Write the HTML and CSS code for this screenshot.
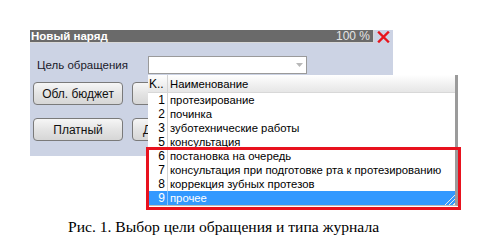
FILE: index.html
```html
<!DOCTYPE html>
<html>
<head>
  <link rel="stylesheet" href="styles.css">
</head>
<body>
  <div class="figure">
    <div class="window">
      <div class="window-header">
        <div class="title-bar">
          <div class="title-text">Новый наряд</div>
          <div class="title-zoom">100 %</div>
        </div>
        <div class="close-button">
          <svg width="13" height="12" viewBox="0 0 13 12">
            <path d="M2 1.5 L11 10.5 M11 1.5 L2 10.5" stroke="#e8141c" stroke-width="2.4" stroke-linecap="square"/>
          </svg>
        </div>
      </div>

      <div class="window-body">
        <div class="field-row">
          <div class="field-label">Цель обращения</div>
          <div class="combo">
            <div class="combo-input"></div>
            <div class="combo-arrow">
              <svg width="7" height="4" viewBox="0 0 7 4"><path d="M0 0 H7 L3.5 4 Z" fill="#b8b8b8"/></svg>
            </div>

            <div class="dropdown">
              <div class="dropdown-head">
                <div class="cell-code">K..</div>
                <div class="cell-name">Наименование</div>
              </div>
              <div class="dropdown-rows" id="rows"></div>
              <div class="annotation"></div>
            </div>
          </div>
        </div>

        <div class="button-row">
          <button class="form-button">Обл. бюджет</button>
          <button class="form-button"></button>
        </div>
        <div class="button-row">
          <button class="form-button">Платный</button>
          <button class="form-button form-button-left">Д</button>
        </div>
      </div>
    </div>
  </div>

  <div class="caption">Рис. 1. Выбор цели обращения и типа журнала</div>

  <script>
    const items = [
      { code: 1, name: 'протезирование' },
      { code: 2, name: 'починка' },
      { code: 3, name: 'зуботехнические работы' },
      { code: 5, name: 'консультация' },
      { code: 6, name: 'постановка на очередь' },
      { code: 7, name: 'консультация при подготовке рта к протезированию' },
      { code: 8, name: 'коррекция зубных протезов' },
      { code: 9, name: 'прочее', selected: true }
    ];

    const container = document.getElementById('rows');
    items.forEach(item => {
      const row = document.createElement('div');
      row.className = item.selected ? 'dropdown-row selected' : 'dropdown-row';

      const code = document.createElement('div');
      code.className = 'cell-code';
      code.textContent = item.code;

      const name = document.createElement('div');
      name.className = 'cell-name';
      name.textContent = item.name;

      row.appendChild(code);
      row.appendChild(name);

      if (item.selected) {
        const grip = document.createElement('div');
        grip.className = 'resize-grip';
        row.appendChild(grip);
      }
      container.appendChild(row);
    });
  </script>
</body>
</html>
```

FILE: styles.css
```css
body {
  margin: 0;
  padding: 0;
  background-color: #ffffff;
  font-family: 'Liberation Sans', Arial, sans-serif;
  font-size: 11px;
  color: #000000;
}

.figure {
  height: 218px;
  padding: 30px 0 0 30px;
  box-sizing: border-box;
}

.window {
  width: 363px;
  background-color: #ccd3e4;
}

.window-header {
  display: flex;
  height: 13px;
  background-color: #ffffff;
}

.title-bar {
  flex: 1;
  display: flex;
  align-items: center;
  justify-content: space-between;
  background-color: #6a6a6a;
  border-right: 1px solid #d8d8d8;
  border-bottom: 1px solid #d8d8d8;
  padding: 0 3px 0 1px;
}

.title-text {
  color: #ffffff;
  font-weight: bold;
  font-size: 11.5px;
}

.title-zoom {
  color: #e4e4e4;
  font-size: 12px;
}

.close-button {
  width: 19px;
  display: flex;
  align-items: center;
  justify-content: center;
  background-color: #ccd3e4;
}

.window-body {
  padding: 13px 0 15px 3px;
}

.field-row {
  display: flex;
  align-items: center;
  height: 18px;
}

.field-label {
  width: 111px;
  padding-left: 4px;
  font-size: 11.5px;
  color: #1a1a2a;
}

.combo {
  position: relative;
  display: flex;
  width: 159px;
  height: 18px;
  box-sizing: border-box;
  border: 1px solid #9a9a9a;
  background-color: #ffffff;
}

.combo-input {
  flex: 1;
}

.combo-arrow {
  width: 14px;
  display: flex;
  align-items: center;
  justify-content: center;
}

.button-row {
  display: flex;
  gap: 9px;
  margin-top: 8px;
}

.button-row + .button-row {
  margin-top: 13px;
}

.form-button {
  width: 90px;
  height: 23px;
  border: 1px solid #7a7a7a;
  border-radius: 4px;
  background: linear-gradient(#f6f6f6, #e4e4e4 50%, #d6d6d6);
  font-family: 'Liberation Sans', Arial, sans-serif;
  font-size: 12px;
  color: #111111;
  padding: 0;
}

.form-button-left {
  text-align: left;
  padding-left: 10px;
}

.dropdown {
  position: absolute;
  top: 18px;
  left: -1px;
  width: 307px;
  background-color: #ffffff;
  border-right: 3px solid #9b9b9b;
  border-bottom: 1px solid #bdbdbd;
  z-index: 2;
}

.dropdown-head {
  display: flex;
  height: 17px;
  align-items: center;
  background: linear-gradient(#ffffff, #f2f2f2 50%, #e6e6e6);
  border-bottom: 1px solid #d8d8d8;
}

.dropdown-row {
  position: relative;
  display: flex;
  height: 14px;
  align-items: center;
}

.cell-code {
  width: 20px;
  padding-right: 2px;
  box-sizing: border-box;
  border-right: 1px solid #d4d4d4;
  font-size: 12px;
  align-self: stretch;
  display: flex;
  align-items: center;
  justify-content: flex-end;
}

.dropdown-head .cell-code {
  justify-content: flex-start;
  padding-left: 1px;
}

.cell-name {
  padding-left: 2px;
  font-size: 11.3px;
  white-space: nowrap;
}

.dropdown-row.selected {
  background-color: #3399ff;
  color: #ffffff;
}

.dropdown-row.selected .cell-code {
  border-right-color: #8cc4ff;
}

.resize-grip {
  position: absolute;
  right: 0;
  bottom: 0;
  width: 11px;
  height: 11px;
  background: repeating-linear-gradient(135deg, transparent 0 2px, #e8e8e8 2px 3px);
  clip-path: polygon(100% 0, 100% 100%, 0 100%);
}

.annotation {
  position: absolute;
  left: -2px;
  right: -6px;
  top: 72px;
  height: 63px;
  border: 3px solid #e8121e;
  box-sizing: border-box;
  pointer-events: none;
}

.caption {
  padding-left: 68px;
  font-family: 'Liberation Serif', 'Times New Roman', serif;
  font-size: 15.6px;
  color: #000000;
}
```
